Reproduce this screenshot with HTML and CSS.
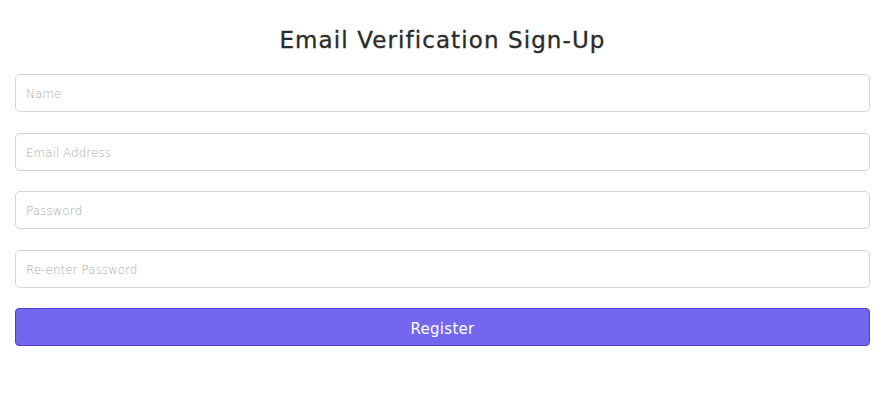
FILE: index.html
```html
<!DOCTYPE html>
<html lang="en">
<head>
<meta charset="utf-8">
<title>Email Verification Sign-Up</title>
<link rel="stylesheet" href="styles.css">
</head>
<body>
<main class="page">
  <h1 class="title">Email Verification Sign-Up</h1>
  <form class="form">
    <input class="field" type="text" placeholder="Name">
    <input class="field" type="email" placeholder="Email Address">
    <input class="field" type="password" placeholder="Password">
    <input class="field" type="password" placeholder="Re-enter Password">
    <button class="btn" type="button">Register</button>
  </form>
</main>
</body>
</html>
```
FILE: styles.css
```css
* { box-sizing: border-box; }
html, body { margin: 0; padding: 0; background: #fff; }
body { font-family: "DejaVu Sans", "Open Sans", sans-serif; }
.page { padding: 26px 16px 0 15px; }
.title {
  margin: 0 0 20px;
  text-align: center;
  font-size: 23px;
  font-weight: 500;
  color: #2b2b2b;
  letter-spacing: 1.1px;
  line-height: 28px;
  -webkit-text-stroke: 0.35px #2b2b2b;
}
.form { display: flex; flex-direction: column; gap: 20.5px; }
.field {
  display: block;
  width: 100%;
  height: 38px;
  padding: 2px 10px 0;
  border: 1px solid #d4d4d4;
  border-radius: 5px;
  font-family: inherit;
  font-size: 12px;
  color: #333;
  background: #fff;
  outline: none;
}
.field::placeholder { color: #ababab; font-weight: 300; }
.btn {
  display: block;
  width: 100%;
  height: 38px;
  padding: 4px 0 0;
  border: 1px solid #4b3fd6;
  border-radius: 4px;
  background: #7367f0;
  color: #fff;
  font-family: inherit;
  font-size: 15px;
  letter-spacing: 0.3px;
}
```
